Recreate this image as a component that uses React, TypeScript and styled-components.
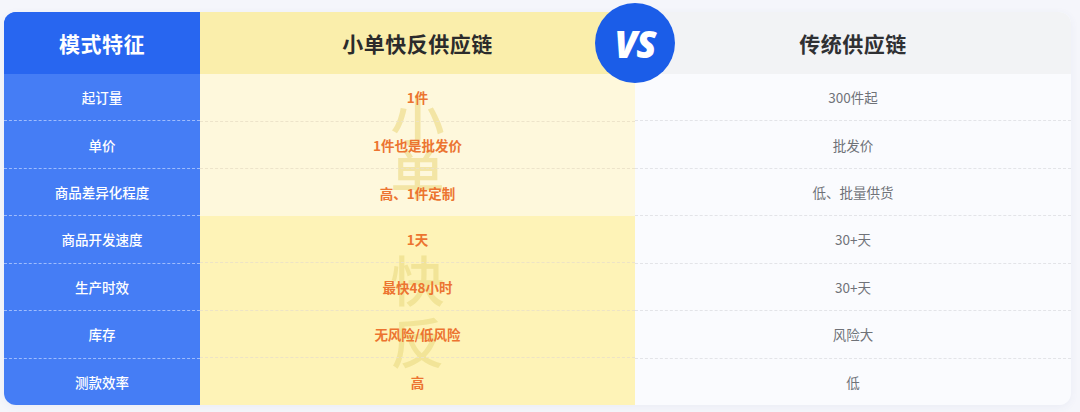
import styled, { createGlobalStyle } from "styled-components";

const GlobalStyle = createGlobalStyle`
  html, body {
    margin: 0;
    padding: 0;
    background: #f5f6fb;
    font-family: "Noto Sans CJK SC", "Noto Sans", sans-serif;
  }
`;

const Page = styled.div`
  width: 1080px;
  height: 412px;
  box-sizing: border-box;
  padding: 12px 9px 7px 4px;
`;

const Card = styled.div`
  position: relative;
  height: 100%;
  display: grid;
  grid-template-columns: 196px 435px 1fr;
  border-radius: 12px;
  overflow: hidden;
  box-shadow: 0 2px 8px rgba(60, 80, 150, 0.06);
`;

const Column = styled.div<{ $bg: string }>`
  display: flex;
  flex-direction: column;
  background: ${(p) => p.$bg};
`;

const HeadCell = styled.div<{ $bg: string; $color: string }>`
  height: 62px;
  flex: none;
  display: flex;
  align-items: center;
  justify-content: center;
  background: ${(p) => p.$bg};
  color: ${(p) => p.$color};
  font-size: 21px;
  font-weight: 700;
  letter-spacing: 0.5px;
`;

const Section = styled.div<{ $bg: string; $rows: number }>`
  position: relative;
  flex: ${(p) => p.$rows};
  display: flex;
  flex-direction: column;
  background: ${(p) => p.$bg};
`;

const Watermark = styled.div<{ $color: string; $lh: number }>`
  position: absolute;
  inset: 0;
  display: flex;
  flex-direction: column;
  align-items: center;
  justify-content: center;
  font-size: 54px;
  line-height: ${(p) => p.$lh}px;
  font-weight: 500;
  color: ${(p) => p.$color};
  pointer-events: none;
`;

const Cell = styled.div<{ $line: string; $first?: boolean; $color: string; $weight: number }>`
  position: relative;
  flex: 1;
  display: flex;
  align-items: center;
  justify-content: center;
  font-size: 13.5px;
  color: ${(p) => p.$color};
  font-weight: ${(p) => p.$weight};
  border-top: ${(p) => (p.$first ? "none" : `1px dashed ${p.$line}`)};
`;

const VsBadge = styled.div`
  position: absolute;
  left: 591px;
  top: -9px;
  width: 80px;
  height: 80px;
  border-radius: 50%;
  background: #1b5de8;
  display: flex;
  align-items: center;
  justify-content: center;
  color: #fff;
  font-family: "Open Sans", "Noto Sans", sans-serif;
  font-size: 37px;
  font-weight: 800;
  font-style: italic;
  letter-spacing: -1px;
  z-index: 2;
`;

const Outer = styled.div`
  position: relative;
  height: 100%;
`;

const labels = ["起订量", "单价", "商品差异化程度", "商品开发速度", "生产时效", "库存", "测款效率"];
const ours = ["1件", "1件也是批发价", "高、1件定制", "1天", "最快48小时", "无风险/低风险", "高"];
const theirs = ["300件起", "批发价", "低、批量供货", "30+天", "30+天", "风险大", "低"];

const OrangeCells = ({ items, offset }: { items: string[]; offset: number }) => (
  <>
    {items.map((t, i) => (
      <Cell key={t} $first={offset + i === 0} $line="rgba(235,225,200,0.9)" $color="#ec7430" $weight={700}>
        <span style={{ position: "relative", zIndex: 1 }}>{t}</span>
      </Cell>
    ))}
  </>
);

export default function App() {
  return (
    <>
      <GlobalStyle />
      <Page>
        <Outer>
          <Card>
            <Column $bg="#457df5">
              <HeadCell $bg="#2866f0" $color="#ffffff">模式特征</HeadCell>
              {labels.map((t, i) => (
                <Cell key={t} $first={i === 0} $line="rgba(190,210,255,0.75)" $color="#ffffff" $weight={500}>
                  {t}
                </Cell>
              ))}
            </Column>
            <Column $bg="#fef3b7">
              <HeadCell $bg="#faeeab" $color="#2b2b2b">小单快反供应链</HeadCell>
              <Section $bg="#fef8dc" $rows={3}>
                <Watermark $color="rgba(233, 214, 120, 0.55)" $lh={54}>
                  <span>小</span>
                  <span>单</span>
                </Watermark>
                <OrangeCells items={ours.slice(0, 3)} offset={0} />
              </Section>
              <Section $bg="#fef3b7" $rows={4}>
                <Watermark $color="rgba(230, 214, 120, 0.5)" $lh={62}>
                  <span>快</span>
                  <span>反</span>
                </Watermark>
                <Cell $first={false} $line="transparent" $color="#ec7430" $weight={700} style={{ borderTop: "none" }}>
                  <span style={{ position: "relative", zIndex: 1 }}>{ours[3]}</span>
                </Cell>
                <OrangeCells items={ours.slice(4)} offset={4} />
              </Section>
            </Column>
            <Column $bg="#fafbfe">
              <HeadCell $bg="#f2f3f5" $color="#2f3033">传统供应链</HeadCell>
              {theirs.map((t, i) => (
                <Cell key={t + i} $first={i === 0} $line="#e3e4e8" $color="#6f7278" $weight={400}>
                  {t}
                </Cell>
              ))}
            </Column>
          </Card>
          <VsBadge>VS</VsBadge>
        </Outer>
      </Page>
    </>
  );
}
